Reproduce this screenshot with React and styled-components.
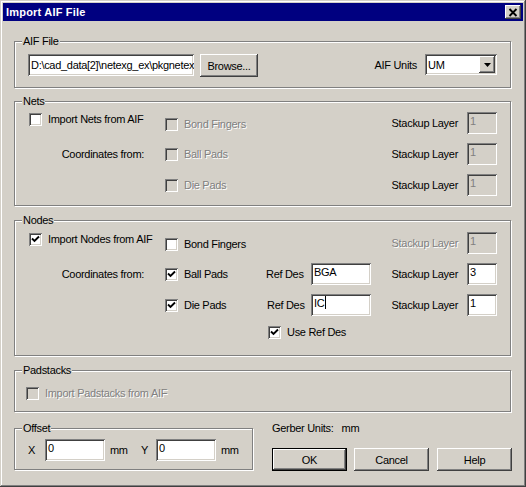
import React from "react";
import styled, { createGlobalStyle } from "styled-components";

const GlobalStyle = createGlobalStyle`
  html, body {
    margin: 0;
    padding: 0;
    background: #d4d0c8;
  }
  body {
    font-family: "Liberation Sans", Arial, sans-serif;
    font-size: 11px;
    letter-spacing: -0.3px;
    color: #000;
  }
`;

const sunken = `
  box-shadow: inset 1px 1px 0 #808080, inset -1px -1px 0 #fff,
    inset 2px 2px 0 #404040, inset -2px -2px 0 #d4d0c8;
`;

const raised = `
  box-shadow: inset -1px -1px 0 #404040, inset 1px 1px 0 #fff,
    inset -2px -2px 0 #808080, inset 2px 2px 0 #d4d0c8;
`;

const Window = styled.div`
  box-sizing: border-box;
  width: 526px;
  height: 487px;
  padding: 3px;
  background: #d4d0c8;
  box-shadow: inset -1px -1px 0 #404040, inset 1px 1px 0 #d4d0c8,
    inset -2px -2px 0 #808080, inset 2px 2px 0 #fff;
`;

const TitleBar = styled.div`
  height: 18px;
  background: #000080;
  display: flex;
  align-items: center;
  justify-content: space-between;
  padding: 0 2px 0 3px;
`;

const Title = styled.span`
  color: #fff;
  font-weight: bold;
  font-size: 11px;
  letter-spacing: 0.2px;
`;

const CloseButton = styled.div`
  width: 16px;
  height: 14px;
  background: #d4d0c8;
  ${raised}
  display: flex;
  align-items: center;
  justify-content: center;
`;

const Body = styled.div`
  padding: 20px 0 0 11px;
`;

const Group = styled.div`
  position: relative;
  box-sizing: border-box;
  width: ${(p) => p.$width || 497}px;
  height: ${(p) => p.$height}px;
  margin-top: ${(p) => p.$gap || 0}px;
  padding: ${(p) => p.$pad || "0"};
  border: 1px solid #808080;
  box-shadow: inset 1px 1px 0 #fff, 1px 1px 0 #fff;
`;

const Legend = styled.span`
  position: absolute;
  top: -8px;
  left: 7px;
  padding: 0 1px;
  line-height: 14px;
  background: #d4d0c8;
`;

const Text = styled.span`
  line-height: 14px;
  white-space: nowrap;
  color: ${(p) => (p.$disabled ? "#808080" : "#000")};
  text-shadow: ${(p) => (p.$disabled ? "1px 1px 0 #fff" : "none")};
`;

const Field = styled.div`
  box-sizing: border-box;
  width: ${(p) => p.$w}px;
  height: ${(p) => p.$h || 22}px;
  padding: ${(p) => (p.$center ? "4px 3px 0" : "2px 3px 0")};
  line-height: 14px;
  overflow: hidden;
  white-space: nowrap;
  background: ${(p) => (p.$disabled ? "#d4d0c8" : "#fff")};
  color: ${(p) => (p.$disabled ? "#808080" : "#000")};
  ${sunken}
`;

const Caret = styled.span`
  display: inline-block;
  width: 1px;
  height: 13px;
  margin-left: 1px;
  background: #000;
  vertical-align: -2px;
`;

const Button = styled.div`
  box-sizing: border-box;
  width: ${(p) => p.$w || 75}px;
  height: 23px;
  display: flex;
  align-items: center;
  justify-content: center;
  background: #d4d0c8;
  ${raised}
  ${(p) =>
    p.$default &&
    `
    border: 1px solid #000;
  `}
`;

const AifRow = styled.div`
  display: flex;
  align-items: flex-start;
`;

const BrowseButton = styled(Button)`
  margin-left: 6px;
`;

const UnitsLabel = styled(Text)`
  margin-left: auto;
  margin-right: 8px;
  margin-top: 4px;
`;

const Select = styled.div`
  box-sizing: border-box;
  width: 72px;
  height: 21px;
  display: flex;
  align-items: center;
  justify-content: space-between;
  padding: 2px;
  background: #fff;
  ${sunken}
`;

const SelectValue = styled.span`
  padding-left: 1px;
  line-height: 14px;
`;

const DropButton = styled.div`
  width: 16px;
  height: 17px;
  background: #d4d0c8;
  ${raised}
  display: flex;
  align-items: center;
  justify-content: center;
`;

const OptionGrid = styled.div`
  display: grid;
  grid-template-columns: 136px 101px 45px 60px 96px 30px;
  grid-template-rows: ${(p) => p.$rows};
  row-gap: 9px;
  align-items: center;
`;

const Cell = styled.div`
  grid-column: ${(p) => p.$col};
  grid-row: ${(p) => p.$row};
  align-self: ${(p) => p.$align || "center"};
  justify-self: ${(p) => p.$justify || "start"};
  padding-right: ${(p) => p.$pr || 0}px;
  padding-left: ${(p) => p.$pl || 0}px;
  padding-top: ${(p) => p.$pt || 0}px;
  display: flex;
`;

const CheckRow = styled.label`
  display: flex;
  align-items: center;
  gap: 6px;
`;

const Box = styled.span`
  box-sizing: border-box;
  width: 13px;
  height: 13px;
  flex: none;
  display: flex;
  align-items: center;
  justify-content: center;
  background: ${(p) => (p.$disabled ? "#d4d0c8" : "#fff")};
  ${sunken}
`;

const BottomRow = styled.div`
  display: flex;
  align-items: flex-start;
`;

const OffsetGrid = styled.div`
  display: grid;
  grid-template-columns: 17px 60px 36px 15px 60px auto;
  grid-template-rows: 22px;
  align-items: center;
`;

const Unit = styled(Text)`
  padding-left: 5px;
`;

const SideColumn = styled.div`
  margin-left: 19px;
  padding-top: 9px;
  display: flex;
  flex-direction: column;
`;

const GerberLine = styled.div`
  display: flex;
  gap: 8px;
  line-height: 14px;
`;

const ButtonRow = styled.div`
  display: flex;
  gap: 7px;
  margin-top: 13px;
  & > :last-child {
    margin-left: 1px;
  }
`;

function Check({ label, checked, disabled }) {
  return (
    <CheckRow>
      <Box $disabled={disabled}>
        {checked && (
          <svg width="9" height="9" viewBox="0 0 9 9">
            <path
              d="M1 3.5 L3.5 6 L8 1.5"
              fill="none"
              stroke={disabled ? "#808080" : "#000"}
              strokeWidth="1.9"
            />
          </svg>
        )}
      </Box>
      <Text $disabled={disabled}>{label}</Text>
    </CheckRow>
  );
}

function StackupCells({ row, value, disabled, labelDisabled }) {
  return (
    <>
      <Cell $col="5" $row={row} $justify="end" $pr={9}>
        <Text $disabled={labelDisabled}>Stackup Layer</Text>
      </Cell>
      <Cell $col="6" $row={row}>
        <Field $w={30} $disabled={disabled}>
          {value}
        </Field>
      </Cell>
    </>
  );
}

export default function App() {
  return (
    <>
      <GlobalStyle />
      <Window>
        <TitleBar>
          <Title>Import AIF File</Title>
          <CloseButton>
            <svg width="10" height="9" viewBox="0 0 10 9">
              <path d="M1.5 1 L8.5 8 M8.5 1 L1.5 8" stroke="#000" strokeWidth="1.9" />
            </svg>
          </CloseButton>
        </TitleBar>
        <Body>
          <Group $height={47} $pad="12px 13px 0 13px">
            <Legend>AIF File</Legend>
            <AifRow>
              <Field $w={166} $center>
                D:\cad_data[2]\netexg_ex\pkgnetexg
              </Field>
              <BrowseButton $w={58}>Browse...</BrowseButton>
              <UnitsLabel>AIF Units</UnitsLabel>
              <Select>
                <SelectValue>UM</SelectValue>
                <DropButton>
                  <svg width="7" height="4" viewBox="0 0 7 4">
                    <path d="M0 0 H7 L3.5 4 Z" fill="#000" />
                  </svg>
                </DropButton>
              </Select>
            </AifRow>
          </Group>

          <Group $height={105} $gap={13} $pad="10px 0 0 14px">
            <Legend>Nets</Legend>
            <OptionGrid $rows="22px 22px 22px">
              <Cell $col="1" $row="1" $align="start">
                <Check label="Import Nets from AIF" />
              </Cell>
              <Cell $col="2" $row="1" $pt={2}>
                <Check label="Bond Fingers" disabled />
              </Cell>
              <StackupCells row="1" value="1" disabled />

              <Cell $col="1" $row="2" $justify="end" $pr={21}>
                <Text>Coordinates from:</Text>
              </Cell>
              <Cell $col="2" $row="2">
                <Check label="Ball Pads" disabled />
              </Cell>
              <StackupCells row="2" value="1" disabled />

              <Cell $col="2" $row="3">
                <Check label="Die Pads" disabled />
              </Cell>
              <StackupCells row="3" value="1" disabled />
            </OptionGrid>
          </Group>

          <Group $height={136} $gap={14} $pad="11px 0 0 14px">
            <Legend>Nodes</Legend>
            <OptionGrid $rows="22px 22px 22px 14px">
              <Cell $col="1" $row="1" $align="start">
                <Check label="Import Nodes from AIF" checked />
              </Cell>
              <Cell $col="2" $row="1" $pt={2}>
                <Check label="Bond Fingers" />
              </Cell>
              <StackupCells row="1" value="1" disabled labelDisabled />

              <Cell $col="1" $row="2" $justify="end" $pr={21}>
                <Text>Coordinates from:</Text>
              </Cell>
              <Cell $col="2" $row="2">
                <Check label="Ball Pads" checked />
              </Cell>
              <Cell $col="3" $row="2">
                <Text>Ref Des</Text>
              </Cell>
              <Cell $col="4" $row="2">
                <Field $w={60}>BGA</Field>
              </Cell>
              <StackupCells row="2" value="3" />

              <Cell $col="2" $row="3">
                <Check label="Die Pads" checked />
              </Cell>
              <Cell $col="3" $row="3" $pl={1}>
                <Text>Ref Des</Text>
              </Cell>
              <Cell $col="4" $row="3">
                <Field $w={60}>
                  IC
                  <Caret />
                </Field>
              </Cell>
              <StackupCells row="3" value="1" />

              <Cell $col="3 / 6" $row="4" $pl={2}>
                <Check label="Use Ref Des" checked />
              </Cell>
            </OptionGrid>
          </Group>

          <Group $height={42} $gap={14} $pad="15px 0 0 11px">
            <Legend>Padstacks</Legend>
            <Check label="Import Padstacks from AIF" disabled />
          </Group>

          <BottomRow>
            <Group $width={239} $height={42} $gap={16} $pad="10px 0 0 13px">
              <Legend>Offset</Legend>
              <OffsetGrid>
                <Text>X</Text>
                <Field $w={60}>0</Field>
                <Unit>mm</Unit>
                <Text>Y</Text>
                <Field $w={60}>0</Field>
                <Unit>mm</Unit>
              </OffsetGrid>
            </Group>
            <SideColumn>
              <GerberLine>
                <span>Gerber Units:</span>
                <span>mm</span>
              </GerberLine>
              <ButtonRow>
                <Button $default>OK</Button>
                <Button>Cancel</Button>
                <Button>Help</Button>
              </ButtonRow>
            </SideColumn>
          </BottomRow>
        </Body>
      </Window>
    </>
  );
}
